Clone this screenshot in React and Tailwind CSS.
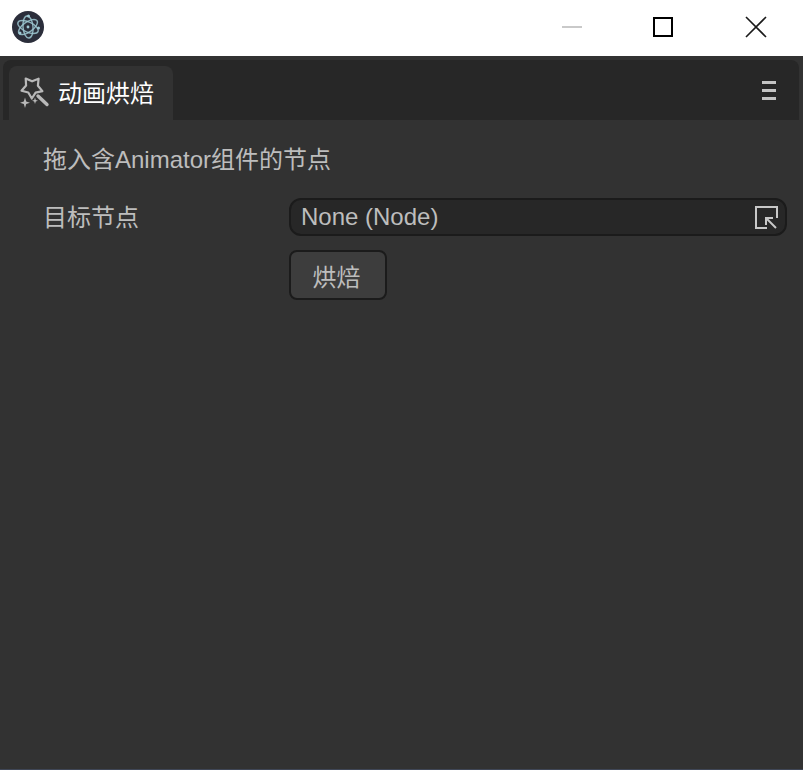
import React from "react";

function ElectronLogo() {
  return (
    <svg width="32" height="32" viewBox="0 0 32 32" fill="none">
      <circle cx="16" cy="16" r="16" fill="#2b2e3b" />
      <g stroke="#9fc9d4" strokeOpacity="0.85" strokeWidth="1.4" fill="none">
        <ellipse cx="16" cy="16" rx="11" ry="5" transform="rotate(25 16 16)" />
        <ellipse cx="16" cy="16" rx="11" ry="5" transform="rotate(85 16 16)" />
        <ellipse cx="16" cy="16" rx="11" ry="5" transform="rotate(145 16 16)" />
      </g>
      <circle cx="16" cy="16" r="1.4" fill="#9fc9d4" />
      <circle cx="16.5" cy="5" r="1.5" fill="#9fc9d4" />
      <circle cx="26.5" cy="17" r="1.5" fill="#9fc9d4" />
      <circle cx="8" cy="22" r="1.5" fill="#9fc9d4" />
    </svg>
  );
}

function WandIcon() {
  return (
    <svg width="32" height="32" viewBox="0 0 32 32" fill="none" stroke="#b9b9b9">
      <path d="M7.7 2.5 L14.1 5.3 L20.6 2.7 L19.9 9.7 L24.4 15.1 L17.6 16.6 L13.8 22.5 L10.3 16.5 L3.5 14.7 L8.1 9.5 Z" strokeWidth="2.2" strokeLinejoin="round" />
      <path d="M20 20 L29 28.5" strokeWidth="3.4" strokeLinecap="round" />
      <path d="M7 21.5 L8.2 25.5 L12 26.7 L8.2 27.9 L7 32 L5.8 27.9 L2 26.7 L5.8 25.5 Z" fill="#b9b9b9" stroke="none" />
      <path d="M17 21.5 L17.8 23.9 L20 24.7 L17.8 25.5 L17 27.9 L16.2 25.5 L14 24.7 L16.2 23.9 Z" fill="#b9b9b9" stroke="none" />
    </svg>
  );
}

function PickIcon() {
  return (
    <svg width="24" height="24" viewBox="0 0 24 24" fill="none" stroke="#c8c8c8" strokeWidth="2">
      <path d="M13 23 H2 V2 H23 V13" />
      <path d="M12 13 L22 23" />
      <path d="M12 20 V13 H19" />
    </svg>
  );
}

export default function App() {
  return (
    <div className="h-[770px] w-[803px] flex flex-col bg-[#323232] border-b border-[#3f4656] overflow-hidden" style={{ fontFamily: '"Liberation Sans", "Noto Sans CJK SC", sans-serif' }}>
      {/* title bar */}
      <div className="h-14 bg-white flex items-center pb-[2px] shrink-0">
        <div className="ml-3">
          <ElectronLogo />
        </div>
        <div className="ml-auto flex items-center">
          <div className="w-5 h-[2px] bg-[#c9c9c9] mr-[71px]"></div>
          <div className="w-5 h-5 border-2 border-black mr-[72px]"></div>
          <svg width="22" height="22" viewBox="0 0 22 22" stroke="#1a1a1a" strokeWidth="1.6" className="mr-9">
            <path d="M1 1 L21 21 M21 1 L1 21" />
          </svg>
        </div>
      </div>

      {/* tab header */}
      <div className="mt-1 ml-[3px] mr-1 h-[60px] bg-[#272727] rounded-t-lg flex items-end px-1.5 shrink-0">
        <div className="h-[54px] w-[164px] bg-[#323232] rounded-t-lg flex items-center pl-[9px] gap-[8px]">
          <div className="mb-[2px]"><WandIcon /></div>
          <span className="text-2xl text-white pt-[2px]">动画烘焙</span>
        </div>
        <div className="ml-auto mr-[17px] self-center flex flex-col gap-[5px]">
          <div className="w-[14px] h-[3px] bg-[#c4c4c4]"></div>
          <div className="w-[14px] h-[3px] bg-[#c4c4c4]"></div>
          <div className="w-[14px] h-[3px] bg-[#c4c4c4]"></div>
        </div>
      </div>

      {/* panel */}
      <div className="flex-1 pl-[43px] pr-4 text-2xl text-[#bdbdbd]">
        <div className="pt-[25px] h-[78px] leading-[30px]">拖入含Animator组件的节点</div>
        <div className="flex items-center">
          <div className="w-[246px] pt-[2px]">目标节点</div>
          <div className="w-[498px] h-[38px] bg-[#272727] border-2 border-[#1b1b1b] rounded-xl flex items-center pl-[10px] pr-[7px]">
            <span>None (Node)</span>
            <div className="ml-auto"><PickIcon /></div>
          </div>
        </div>
        <div className="mt-[14px] ml-[246px]">
          <button className="w-[98px] h-[50px] bg-[#3d3d3d] border-2 border-[#1b1b1b] rounded-lg text-[#bdbdbd] pt-[6px] pr-[3px]">烘焙</button>
        </div>
      </div>
    </div>
  );
}
